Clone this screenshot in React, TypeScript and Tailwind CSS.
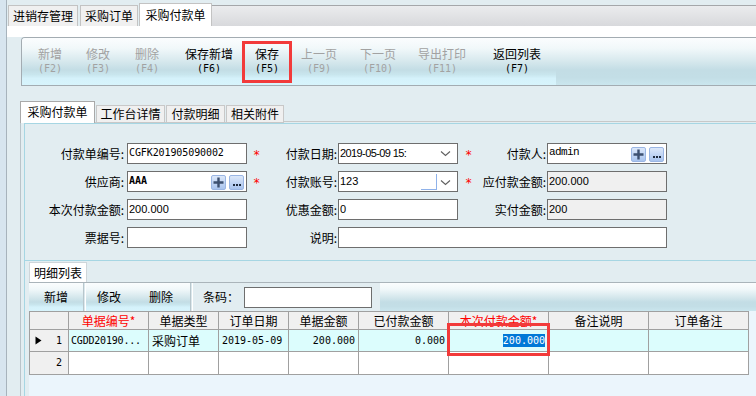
import React from "react";

const mono = "font-['DejaVu_Sans_Mono','Liberation_Mono',monospace]";
const sans = "font-['Liberation_Sans','Noto_Sans_CJK_SC',sans-serif]";
const grad =
  "bg-[linear-gradient(to_bottom,#fbfdfe_0%,#f1f8fa_22%,#d6e8ed_50%,#c3dde5_68%,#c9e6ee_78%,#d5f2fb_86%,#d7f4fc_100%)]";
const gradFill =
  "bg-[linear-gradient(to_bottom,#fbfdfe_0%,#f1f8fa_22%,#d6e8ed_50%,#c3dde5_68%,#c3dee6_84%,#cae6ee_100%)]";

type TB = { t: string; k: string; w: string; d?: boolean };
const toolbar: TB[] = [
  { t: "新增", k: "(F2)", w: "w-[48px]", d: true },
  { t: "修改", k: "(F3)", w: "w-[48px]", d: true },
  { t: "删除", k: "(F4)", w: "w-[50px]", d: true },
  { t: "保存新增", k: "(F6)", w: "w-[74px]" },
  { t: "保存", k: "(F5)", w: "w-[42px]" },
  { t: "上一页", k: "(F9)", w: "w-[62px]", d: true },
  { t: "下一页", k: "(F10)", w: "w-[56px]", d: true },
  { t: "导出打印", k: "(F11)", w: "w-[72px]", d: true },
  { t: "返回列表", k: "(F7)", w: "w-[78px]" },
];

function Chevron() {
  return (
    <svg width="11" height="7" viewBox="0 0 11 7" className="shrink-0">
      <path d="M1 1.5l4.5 4 4.5-4" fill="none" stroke="#606060" strokeWidth="1.1" />
    </svg>
  );
}

function PlusBtns() {
  return (
    <div className="ml-auto flex items-start gap-[3px] pt-[1px] pr-[2px]">
      <div className="w-[15px] h-[15px] border border-[#9ab6e4] rounded-[2px] bg-[linear-gradient(to_bottom,#dce8fa,#a9c4ee)] flex items-center justify-center">
        <svg width="11" height="11" viewBox="0 0 11 11">
          <path d="M5.5 0.5v10M0.5 5.5h10" stroke="#3c5070" strokeWidth="2.4" />
        </svg>
      </div>
      <div className="w-[15px] h-[15px] border border-[#9ab6e4] rounded-[2px] bg-[linear-gradient(to_bottom,#dce8fa,#a9c4ee)] flex items-end justify-center pb-[3px] gap-[1px]">
        <span className="w-[2px] h-[2px] bg-[#1e2a3c]" />
        <span className="w-[2px] h-[2px] bg-[#1e2a3c]" />
        <span className="w-[2px] h-[2px] bg-[#1e2a3c]" />
      </div>
    </div>
  );
}

function Input({
  w = "w-[120px]",
  gray,
  children,
}: {
  w?: string;
  gray?: boolean;
  children?: React.ReactNode;
}) {
  return (
    <div
      className={`${w} h-[21px] shrink-0 border border-[#6e6e6e] flex items-start pl-[1px] pt-[2px] ${
        gray ? "bg-[#f0f0f0]" : "bg-white"
      }`}
    >
      {children}
    </div>
  );
}

const Star = () => <span className={`text-[#ff0000] ${mono} text-[12px] leading-[12px]`}>*</span>;

function Mid({ w, star, label, pl }: { w: string; star?: boolean; label?: string; pl: string }) {
  return (
    <div className={`${w} shrink-0 flex items-center justify-between ${pl} pr-[1px]`}>
      <span>{star ? <Star /> : null}</span>
      <span>{label}</span>
    </div>
  );
}

const cols = [
  { h: "", w: "w-[39px]" },
  { h: "单据编号*", w: "w-[80px]", red: true },
  { h: "单据类型", w: "w-[70px]" },
  { h: "订单日期", w: "w-[70px]" },
  { h: "单据金额", w: "w-[70px]" },
  { h: "已付款金额", w: "w-[90px]" },
  { h: "本次付款金额*", w: "w-[100px]", red: true },
  { h: "备注说明", w: "w-[100px]" },
  { h: "订单备注", w: "w-[100px]" },
];

export default function App() {
  return (
    <div className="relative w-[756px] h-[396px] overflow-hidden bg-[#e2edf1] flex text-[12px] leading-[14px] text-black font-['Noto_Sans_CJK_SC',sans-serif]">
      {/* left strip */}
      <div className="w-[7px] shrink-0 bg-[#d7e5ef] border-r border-[#a7b3bc]" />

      <div className="flex-1 flex flex-col min-w-0">
        {/* top tabs */}
        <div className="h-[26px] flex items-end pl-[1px] shrink-0">
          <div className="w-[70px] h-[21px] bg-[#f0f0f0] border border-b-0 border-[#c3c3c3] flex items-center justify-center">进销存管理</div>
          <div className="w-[2px]" />
          <div className="w-[58px] h-[21px] bg-[#f0f0f0] border border-b-0 border-[#c3c3c3] flex items-center justify-center">采购订单</div>
          <div className="w-[1px]" />
          <div className="w-[73px] h-[23px] bg-white border border-b-0 border-[#c3c3c3] flex items-center justify-center pb-[1px]">采购付款单</div>
          <div className="flex-1 h-[21px] border-t border-[#a5a7aa] bg-[linear-gradient(to_bottom,#ebecee,#d8d9dc)]" />
        </div>
        <div className="h-[11px] bg-white shrink-0" />

        {/* main toolbar */}
        <div className="ml-[14px] h-[49px] shrink-0 flex border-t border-b border-l border-[#a3acb2] rounded-tl-[4px] overflow-hidden">
          <div className={`flex pl-[4px] ${grad}`}>
            {toolbar.map((b) => (
              <div
                key={b.t}
                className={`${b.w} flex flex-col items-center justify-center pb-[1px] ${sans} ${
                  b.d ? "text-[#a2a2a2]" : "text-black"
                }`}
              >
                <span className="text-[12px] leading-[13px]">{b.t}</span>
                <span className={`${mono} text-[10px] leading-[11px] mt-[1px]`}>{b.k}</span>
              </div>
            ))}
          </div>
          <div className={`flex-1 ${gradFill}`} />
        </div>

        <div className="h-[15px] shrink-0" />

        {/* form tabs */}
        <div className="ml-[13px] h-[22px] flex items-end shrink-0">
          <div className="w-[75px] h-[22px] bg-white border border-b-0 border-[#a9a9a9] flex items-center justify-center pb-[1px]">采购付款单</div>
          <div className="w-[1px] h-[18px] border-b border-[#c8c8c8]" />
          <div className="w-[69px] h-[18px] bg-[#f0f0f0] border border-[#c8c8c8] flex items-center justify-center">工作台详情</div>
          <div className="w-[1px] h-[18px] border-b border-[#c8c8c8]" />
          <div className="w-[59px] h-[18px] bg-[#f0f0f0] border border-[#c8c8c8] flex items-center justify-center">付款明细</div>
          <div className="w-[1px] h-[18px] border-b border-[#c8c8c8]" />
          <div className="w-[58px] h-[18px] bg-[#f0f0f0] border border-[#c8c8c8] flex items-center justify-center">相关附件</div>
          <div className="flex-1 h-[2px] border-t border-[#c8c8c8]" />
        </div>

        {/* body: outer frame */}
        <div className="ml-[13px] flex-1 flex min-h-0">
          <div className="w-[4px] shrink-0 border-l border-[#b9c4ca]" />
          <div className="flex-1 flex flex-col border-l border-[#a6d6e3] min-w-0">
            {/* form panel */}
            <div className="border-t border-b border-[#a6d6e3] pt-[19px] pb-[12px] flex flex-col gap-[7px] shrink-0">
              {/* row 1 */}
              <div className="flex items-center h-[21px]">
                <div className="w-[102px] shrink-0 text-right pr-[3px]">付款单编号:</div>
                <Input>
                  <span className={`${mono} text-[10px] leading-[13px] tracking-[-0.1px]`}>CGFK201905090002</span>
                </Input>
                <Mid w="w-[91px]" pl="pl-[6px]" star label="付款日期:" />
                <Input>
                  <span className={`${sans} text-[11px] leading-[14px] tracking-[-0.6px]`}>2019-05-09 15:</span>
                  <span className="ml-auto mr-[6px] mt-[4px]"><Chevron /></span>
                </Input>
                <Mid w="w-[89px]" pl="pl-[7px]" star label="付款人:" />
                <Input>
                  <span className={`font-['Liberation_Mono',monospace] text-[11px] leading-[13px] tracking-[-0.6px]`}>admin</span>
                  <PlusBtns />
                </Input>
              </div>
              {/* row 2 */}
              <div className="flex items-center h-[21px]">
                <div className="w-[102px] shrink-0 text-right pr-[3px]">供应商:</div>
                <Input>
                  <span className={`${mono} text-[10px] leading-[13px] font-bold`}>AAA</span>
                  <PlusBtns />
                </Input>
                <Mid w="w-[91px]" pl="pl-[6px]" star label="付款账号:" />
                <Input>
                  <span className={`${sans} text-[11px] leading-[14px]`}>123</span>
                  <span className="ml-auto mt-[0px] w-[16px] h-[16px] border-r border-b border-[#8fb2ea]" />
                  <span className="ml-[3px] mr-[6px] mt-[5px]"><Chevron /></span>
                </Input>
                <Mid w="w-[89px]" pl="pl-[7px]" star label="应付款金额:" />
                <Input gray>
                  <span className={`${sans} text-[11px] leading-[14px]`}>200.000</span>
                </Input>
              </div>
              {/* row 3 */}
              <div className="flex items-center h-[21px]">
                <div className="w-[102px] shrink-0 text-right pr-[3px]">本次付款金额:</div>
                <Input>
                  <span className={`${sans} text-[11px] leading-[14px]`}>200.000</span>
                </Input>
                <Mid w="w-[91px]" pl="pl-[6px]" label="优惠金额:" />
                <Input>
                  <span className={`${sans} text-[11px] leading-[14px]`}>0</span>
                </Input>
                <Mid w="w-[89px]" pl="pl-[7px]" label="实付金额:" />
                <Input gray>
                  <span className={`${sans} text-[11px] leading-[14px]`}>200</span>
                </Input>
              </div>
              {/* row 4 */}
              <div className="flex items-center h-[21px]">
                <div className="w-[102px] shrink-0 text-right pr-[3px]">票据号:</div>
                <Input />
                <Mid w="w-[91px]" pl="pl-[6px]" label="说明:" />
                <Input w="w-[329px]" />
              </div>
            </div>

            {/* detail list section */}
            <div className="flex-1 flex flex-col pl-[4px] min-h-0">
              <div className="h-[21px] flex items-end shrink-0">
                <div className="w-[58px] h-[20px] bg-white border border-b-0 border-[#cfd6da] flex items-center justify-center">明细列表</div>
              </div>
              <div className="h-[29px] flex border-t border-[#aab4ba] shrink-0">
                <div className={`w-[54px] flex items-center justify-center ${grad}`}>新增</div>
                <div className="w-[3px] border-l border-[#b8c6cc] border-r border-r-white bg-[#dbe8ed]" />
                <div className={`flex ${grad}`}>
                  <div className="w-[46px] flex items-center justify-center">修改</div>
                  <div className="w-[58px] flex items-center justify-center">删除</div>
                </div>
                <div className="w-[3px] border-l border-[#b8c6cc] border-r border-r-white bg-[#dbe8ed]" />
                <div className="flex items-center pl-[10px]">
                  <span className="w-[41px]">条码：</span>
                  <div className="w-[128px] h-[21px] bg-white border border-[#6e6e6e]" />
                </div>
                <div className="w-[8px]" />
                <div className={`flex-1 ${gradFill}`} />
              </div>
              <div className="flex-1 bg-[#ebf5fc]">
                <div className="w-[720px] border-t border-l border-[#a0a0a0]">
                  {/* header */}
                  <div className="flex h-[18px]">
                    {cols.map((c, i) => (
                      <div
                        key={i}
                        className={`${c.w} shrink-0 bg-[#f0f0f0] border-b border-r border-[#a0a0a0] flex items-center justify-center ${
                          c.red ? "text-[#ff0000]" : ""
                        }`}
                      >
                        {c.h}
                      </div>
                    ))}
                  </div>
                  {/* row 1 */}
                  <div className={`flex h-[22px] ${mono} text-[10px]`}>
                    <div className="w-[39px] shrink-0 bg-[#f0f0f0] border-b border-r border-[#a0a0a0] flex items-center pl-[5px] pr-[6px]">
                      <svg width="7" height="9" viewBox="0 0 7 9">
                        <path d="M0.5 0.5L6.5 4.5L0.5 8.5Z" fill="#000" />
                      </svg>
                      <span className="ml-auto">1</span>
                    </div>
                    <div className="w-[80px] shrink-0 bg-[#dcfdfd] border-b border-r border-[#a0a0a0] flex items-center pl-[2px] tracking-[-0.2px]">CGDD20190...</div>
                    <div className="w-[70px] shrink-0 bg-[#dcfdfd] border-b border-r border-[#a0a0a0] flex items-center pl-[3px] font-['Noto_Sans_CJK_SC',sans-serif] text-[12px]">采购订单</div>
                    <div className="w-[70px] shrink-0 bg-[#dcfdfd] border-b border-r border-[#a0a0a0] flex items-center pl-[3px]">2019-05-09</div>
                    <div className="w-[70px] shrink-0 bg-[#dcfdfd] border-b border-r border-[#a0a0a0] flex items-center justify-end pr-[3px]">200.000</div>
                    <div className="w-[90px] shrink-0 bg-[#dcfdfd] border-b border-r border-[#a0a0a0] flex items-center justify-end pr-[3px]">0.000</div>
                    <div className="w-[100px] shrink-0 bg-[#dcfdfd] border-b border-r border-[#a0a0a0] flex items-center justify-end pr-[3px]">
                      <span className="bg-[#0078d7] text-white leading-[13px]">200.000</span>
                    </div>
                    <div className="w-[100px] shrink-0 bg-[#dcfdfd] border-b border-r border-[#a0a0a0]" />
                    <div className="w-[100px] shrink-0 bg-[#dcfdfd] border-b border-r border-[#a0a0a0]" />
                  </div>
                  {/* row 2 */}
                  <div className={`flex h-[23px] ${mono} text-[10px]`}>
                    <div className="w-[39px] shrink-0 bg-[#f0f0f0] border-b border-r border-[#a0a0a0] flex items-center justify-end pr-[6px]">2</div>
                    {cols.slice(1).map((c, i) => (
                      <div key={i} className={`${c.w} shrink-0 bg-white border-b border-r border-[#a0a0a0]`} />
                    ))}
                  </div>
                </div>
              </div>
            </div>
          </div>
        </div>
      </div>

      {/* red annotation boxes */}
      <div className="absolute left-[242px] top-[41px] w-[50px] h-[42px] border-[3px] border-[#f23a3a] pointer-events-none" />
      <div className="absolute left-[447px] top-[323px] w-[103px] h-[33px] border-[3px] border-[#f23a3a] pointer-events-none" />
    </div>
  );
}
